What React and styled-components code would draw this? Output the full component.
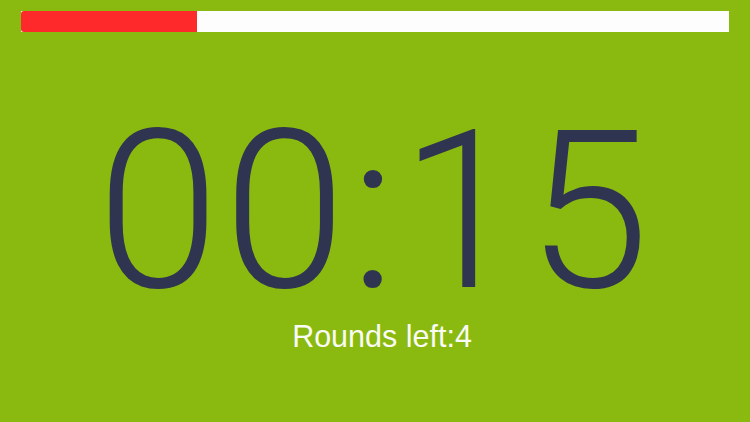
import React from "react";
import styled, { createGlobalStyle } from "styled-components";

const GlobalStyle = createGlobalStyle`
  html, body {
    margin: 0;
    padding: 0;
    background: #8aba10;
  }
`;

const Screen = styled.div`
  width: 750px;
  height: 422px;
  background: #8aba10;
  display: flex;
  flex-direction: column;
  align-items: center;
  padding-top: 11px;
  box-sizing: border-box;
  overflow: hidden;
`;

const Track = styled.div`
  width: 708px;
  height: 21px;
  background: #fdfdfd;
  display: flex;
`;

const Fill = styled.div`
  height: 100%;
  background: #fd292b;
  border-radius: 3px 0 0 3px;
`;

const Clock = styled.div`
  margin-top: 80px;
  font-family: Roboto, "Liberation Sans", sans-serif;
  font-weight: 300;
  font-size: 221px;
  line-height: 200px;
  color: #2f3450;
  letter-spacing: 4px;
`;

const Rounds = styled.div`
  margin-top: 7px;
  padding-left: 14px;
  font-family: "Liberation Sans", Arial, sans-serif;
  font-size: 30.5px;
  line-height: 34px;
  color: #fbfbf5;
`;

export default function App() {
  const progress = 0.249;
  return (
    <Screen>
      <GlobalStyle />
      <Track>
        <Fill style={{ width: `${progress * 100}%` }} />
      </Track>
      <Clock>00:15</Clock>
      <Rounds>Rounds left:4</Rounds>
    </Screen>
  );
}
